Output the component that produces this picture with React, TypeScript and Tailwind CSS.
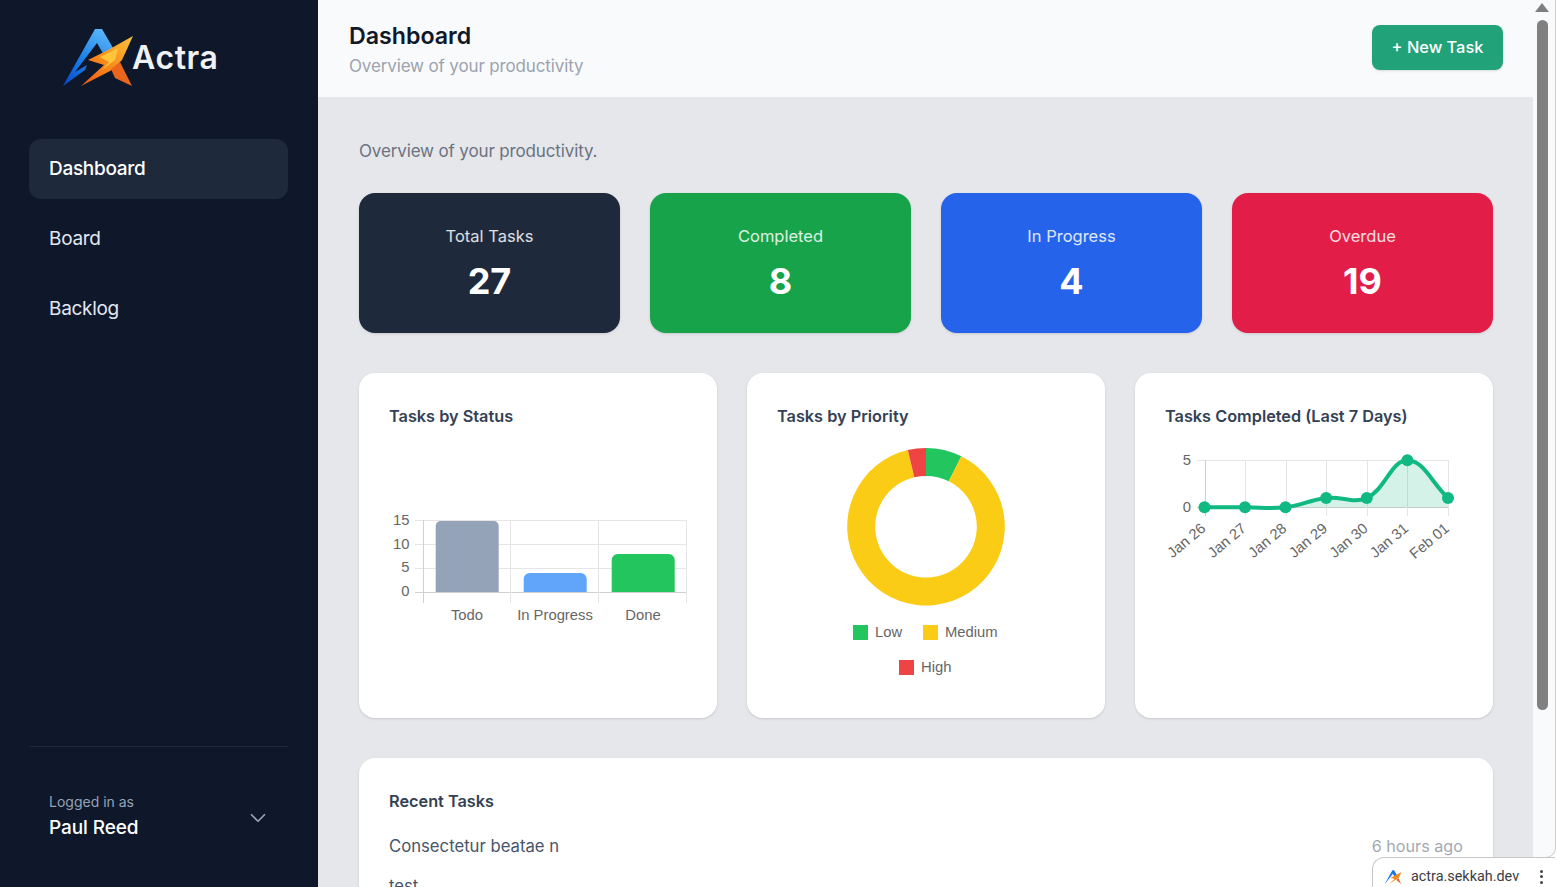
import { ChevronDown } from "lucide-react";

const inter = "font-['Inter',sans-serif]";
const chartFont = "Liberation Sans, Arial, sans-serif";

function Logo() {
  return (
    <svg width="80" height="64" viewBox="60 25 80 64" className="shrink-0">
      <defs>
        <linearGradient id="lb" x1="0.7" y1="0" x2="0.2" y2="1">
          <stop offset="0" stopColor="#5ab4f7" />
          <stop offset="0.5" stopColor="#1f86ea" />
          <stop offset="1" stopColor="#0b4fd0" />
        </linearGradient>
        <linearGradient id="lo" x1="1" y1="0" x2="0" y2="1">
          <stop offset="0" stopColor="#f7c33f" />
          <stop offset="0.5" stopColor="#f98e1c" />
          <stop offset="1" stopColor="#e9541a" />
        </linearGradient>
      </defs>
      <polygon points="95,29 102,29 116,53 105,57 97,43 75,72 87,65 85,70 63,86" fill="url(#lb)" />
      <polygon points="133,36 108,50 88,60 104,65 81,86 112,70 122,60" fill="url(#lo)" />
      <polygon points="118,48 100,57 109,62 102,70 115,60" fill="#ffc53a" />
      <polygon points="111,69 120,62 132,86 115,78" fill="#ea661c" />
    </svg>
  );
}

function spline(pts: number[][], t = 0.4) {
  let d = `M${pts[0][0]},${pts[0][1]}`;
  const dist = (a: number[], b: number[]) => Math.hypot(a[0] - b[0], a[1] - b[1]);
  const cps = pts.map((p, i) => {
    const a = pts[Math.max(i - 1, 0)];
    const c = pts[Math.min(i + 1, pts.length - 1)];
    const d1 = dist(a, p);
    const d2 = dist(p, c);
    const s = d1 + d2 || 1;
    return {
      in: [p[0] - (t * d1 / s) * (c[0] - a[0]), p[1] - (t * d1 / s) * (c[1] - a[1])],
      out: [p[0] + (t * d2 / s) * (c[0] - a[0]), p[1] + (t * d2 / s) * (c[1] - a[1])],
    };
  });
  for (let i = 1; i < pts.length; i++) {
    d += ` C${cps[i - 1].out[0]},${cps[i - 1].out[1]} ${cps[i].in[0]},${cps[i].in[1]} ${pts[i][0]},${pts[i][1]}`;
  }
  return d;
}

function BarChart() {
  const grid = "#e5e5e5";
  return (
    <svg width="298" height="270" viewBox="389 429 298 270" className="overflow-visible" fontFamily={chartFont} fontSize="14.8" fill="#666">
      {[520.5, 544.5, 568.5].map((y) => (
        <line key={y} x1="415" x2="687" y1={y} y2={y} stroke={grid} />
      ))}
      <line x1="415" x2="687" y1="592.5" y2="592.5" stroke="#d0d0d0" />
      {[423.5, 510.5, 598.5, 686.5].map((x, i) => (
        <line key={x} x1={x} x2={x} y1="520" y2="603" stroke={i === 0 ? "#d0d0d0" : grid} />
      ))}
      <path d="M435.7,592 V526 a5,5 0 0 1 5,-5 H493.7 a5,5 0 0 1 5,5 V592 Z" fill="#94a3b8" />
      <path d="M523.7,592 V579 a6,6 0 0 1 6,-6 H580.7 a6,6 0 0 1 6,6 V592 Z" fill="#60a5fa" />
      <path d="M611.7,592 V560 a6,6 0 0 1 6,-6 H668.7 a6,6 0 0 1 6,6 V592 Z" fill="#22c55e" />
      {[["15", 525], ["10", 549], ["5", 572], ["0", 596]].map(([t, y]) => (
        <text key={t} x="409.5" y={y} textAnchor="end">{t}</text>
      ))}
      <text x="467" y="620" textAnchor="middle">Todo</text>
      <text x="555" y="620" textAnchor="middle">In Progress</text>
      <text x="643" y="620" textAnchor="middle">Done</text>
    </svg>
  );
}

function arc(a0: number, a1: number) {
  const cx = 926, cy = 526.7, R = 78.8, r = 50.8;
  const p = (rad: number, a: number) => [cx + rad * Math.sin((a * Math.PI) / 180), cy - rad * Math.cos((a * Math.PI) / 180)];
  const [x0, y0] = p(R, a0), [x1, y1] = p(R, a1), [x2, y2] = p(r, a1), [x3, y3] = p(r, a0);
  const large = a1 - a0 > 180 ? 1 : 0;
  return `M${x0},${y0} A${R},${R} 0 ${large} 1 ${x1},${y1} L${x2},${y2} A${r},${r} 0 ${large} 0 ${x3},${y3} Z`;
}

function DonutChart() {
  return (
    <svg width="298" height="270" viewBox="777 429 298 270" className="overflow-visible" fontFamily={chartFont} fontSize="14.8" fill="#666">
      <path d={arc(0, 26.67)} fill="#22c55e" />
      <path d={arc(26.67, 346.67)} fill="#facc15" />
      <path d={arc(346.67, 360)} fill="#ef4444" />
      <rect x="853" y="625" width="15" height="15" fill="#22c55e" />
      <text x="875" y="637">Low</text>
      <rect x="923" y="625" width="15" height="15" fill="#facc15" />
      <text x="945" y="637">Medium</text>
      <rect x="899" y="660" width="15" height="15" fill="#ef4444" />
      <text x="921" y="672">High</text>
    </svg>
  );
}

function LineChart() {
  const xs = [1204.5, 1245, 1285.5, 1326.2, 1366.8, 1407.4, 1448];
  const ys = [507.3, 507.3, 507.3, 497.9, 497.9, 460.3, 497.9];
  const pts = xs.map((x, i) => [x, ys[i]]);
  const line = spline(pts);
  const labels = ["Jan 26", "Jan 27", "Jan 28", "Jan 29", "Jan 30", "Jan 31", "Feb 01"];
  return (
    <svg width="298" height="270" viewBox="1165 429 298 270" className="overflow-visible" fontFamily={chartFont} fontSize="14.8" fill="#666">
      <line x1="1197" x2="1449" y1="460.5" y2="460.5" stroke="#e5e5e5" />
      <line x1="1197" x2="1449" y1="507.5" y2="507.5" stroke="#cfcfcf" />
      {xs.map((x, i) => (
        <line key={x} x1={Math.round(x) + 0.5} x2={Math.round(x) + 0.5} y1="460" y2="516" stroke={i === 0 ? "#cfcfcf" : "#e5e5e5"} />
      ))}
      <path d={`${line} L1448,507.3 L1204.5,507.3 Z`} fill="#10b981" fillOpacity="0.18" />
      <path d={line} fill="none" stroke="#10b981" strokeWidth="4" />
      {pts.map(([x, y]) => (
        <circle key={x} cx={x} cy={y} r="6" fill="#10b981" />
      ))}
      <text x="1191" y="465" textAnchor="end">5</text>
      <text x="1191" y="512" textAnchor="end">0</text>
      {labels.map((l, i) => (
        <text key={l} x={xs[i] + 2} y="530" textAnchor="end" transform={`rotate(-40 ${xs[i] + 2} 530)`}>{l}</text>
      ))}
    </svg>
  );
}

const stats = [
  { label: "Total Tasks", value: "27", bg: "bg-[#1e293b]" },
  { label: "Completed", value: "8", bg: "bg-[#16a34a]" },
  { label: "In Progress", value: "4", bg: "bg-[#2563eb]" },
  { label: "Overdue", value: "19", bg: "bg-[#e11d48]" },
];

function ChartCard({ title, children }: { title: string; children: React.ReactNode }) {
  return (
    <div className="bg-white rounded-[16px] h-[345px] pt-[30px] px-[30px] shadow-sm overflow-hidden">
      <h3 className="text-[16.3px] leading-[26px] font-semibold text-[#334155]">{title}</h3>
      {children}
    </div>
  );
}

export default function App() {
  return (
    <div className={`${inter} relative w-[1557px] h-[887px] overflow-hidden flex bg-[#e5e7eb]`}>
      <aside className="w-[318px] shrink-0 bg-[#0f172a] flex flex-col pl-[29px] pr-[30px] text-white">
        <div className="h-[139px] shrink-0 flex items-start pt-[25px] pl-[31px]">
          <Logo />
          <span className="text-[32px] leading-[38px] font-semibold tracking-[0.6px] text-[#eef2f7] mt-[14px] -ml-[8px]">Actra</span>
        </div>
        <nav className="flex flex-col gap-[10px] text-[19px] tracking-[-0.3px]">
          <a className="h-[60px] rounded-[12px] bg-[#1e293b] flex items-center px-[20px] pt-[1px] font-medium">Dashboard</a>
          <a className="h-[60px] rounded-[12px] flex items-center px-[20px] pt-[1px] text-[#e2e8f0]">Board</a>
          <a className="h-[60px] rounded-[12px] flex items-center px-[20px] pt-[1px] text-[#e2e8f0]">Backlog</a>
        </nav>
        <div className="mt-auto h-[141px] border-t border-[#1e293b] flex items-start justify-between pt-[45px] pl-[20px] pr-[17px]">
          <div>
            <div className="text-[14px] leading-[20px] text-[#94a3b8]">Logged in as</div>
            <div className="text-[19px] leading-[30px] tracking-[-0.1px] font-medium text-white mt-[1px]">Paul Reed</div>
          </div>
          <ChevronDown strokeWidth={1.6} className="w-[26px] h-[26px] mt-[13px] text-[#94a3b8]" />
        </div>
      </aside>

      <main className="flex-1 min-w-0 flex flex-col">
        <header className="h-[98px] shrink-0 bg-[#f9fafb] border-b border-[#e5e7eb] pl-[31px] pr-[30px] flex items-center justify-between">
          <div className="mt-[2px]">
            <h1 className="text-[23.2px] leading-[32px] font-semibold text-[#111827]">Dashboard</h1>
            <p className="text-[17px] leading-[28px] tracking-[-0.14px] text-[#9ca3af]">Overview of your productivity</p>
          </div>
          <button className="w-[131px] h-[45px] -mt-[3px] rounded-[8px] bg-[#21a278] text-white text-[16.4px] font-medium shadow-sm">+ New Task</button>
        </header>
        <div className="pl-[41px] pr-[40px] pt-[39px]">
          <p className="text-[17px] leading-[28px] tracking-[-0.14px] text-[#6b7280]">Overview of your productivity.</p>
          <div className="grid grid-cols-4 gap-[30px] mt-[28px]">
            {stats.map((s) => (
              <div key={s.label} className={`${s.bg} h-[140px] rounded-[16px] text-white flex flex-col items-center pt-[29px] shadow-sm`}>
                <div className="text-[16.5px] leading-[28px] text-white/85">{s.label}</div>
                <div className="text-[36px] leading-[40px] font-bold mt-[11px]">{s.value}</div>
              </div>
            ))}
          </div>
          <div className="grid grid-cols-3 gap-[30px] mt-[40px]">
            <ChartCard title="Tasks by Status"><BarChart /></ChartCard>
            <ChartCard title="Tasks by Priority"><DonutChart /></ChartCard>
            <ChartCard title="Tasks Completed (Last 7 Days)"><LineChart /></ChartCard>
          </div>
          <div className="mt-[40px] bg-white rounded-[16px] h-[300px] px-[30px] pt-[30px] shadow-sm">
            <h3 className="text-[16.3px] leading-[26px] font-semibold text-[#334155]">Recent Tasks</h3>
            <div className="flex justify-between items-center mt-[19px] h-[28px] text-[16.7px]">
              <span className="text-[#475569]">Consectetur beatae n</span>
              <span className="text-[16.2px] text-[#a3a9b3] -mt-[1px]">6 hours ago</span>
            </div>
            <div className="flex justify-between items-center mt-[12px] h-[28px] text-[16.7px]">
              <span className="text-[#475569]">test</span>
            </div>
          </div>
        </div>
      </main>

      <div className="w-[24px] shrink-0 bg-white">
        <div className="w-[23px] h-[858px] bg-[#f9fafb] border-r border-b border-[#cfd1d4] rounded-br-[10px] flex flex-col items-center">
          <svg width="14" height="10" viewBox="0 0 14 10" className="mt-[3px] -ml-[4px]"><polygon points="7,0 14,9 0,9" fill="#7f7f7f" /></svg>
          <div className="w-[11px] h-[690px] mt-[7px] -ml-[4px] rounded-full bg-[#808080]" />
        </div>
      </div>

      <div className="absolute right-[2px] bottom-0 w-[183px] h-[30px] bg-white border-t border-l border-[#c4c7c5] rounded-tl-[12px] flex items-center pl-[11px] pt-[8px]">
        <svg width="18" height="16" viewBox="60 27 75 60" className="shrink-0">
          <polygon points="95,29 102,29 116,53 105,57 97,43 75,72 63,86" fill="#1a73e8" />
          <polygon points="133,36 108,50 88,60 104,65 81,86 122,60" fill="#f78a1d" />
          <polygon points="111,69 120,62 132,86" fill="#e9641c" />
        </svg>
        <span className="ml-[9px] text-[14.4px] text-[#3c4043] font-['Roboto',sans-serif]">actra.sekkah.dev</span>
        <span className="ml-auto mr-[12px] flex flex-col gap-[2.5px]">
          <i className="w-[3px] h-[3px] rounded-full bg-[#444]" />
          <i className="w-[3px] h-[3px] rounded-full bg-[#444]" />
          <i className="w-[3px] h-[3px] rounded-full bg-[#444]" />
        </span>
      </div>
    </div>
  );
}
